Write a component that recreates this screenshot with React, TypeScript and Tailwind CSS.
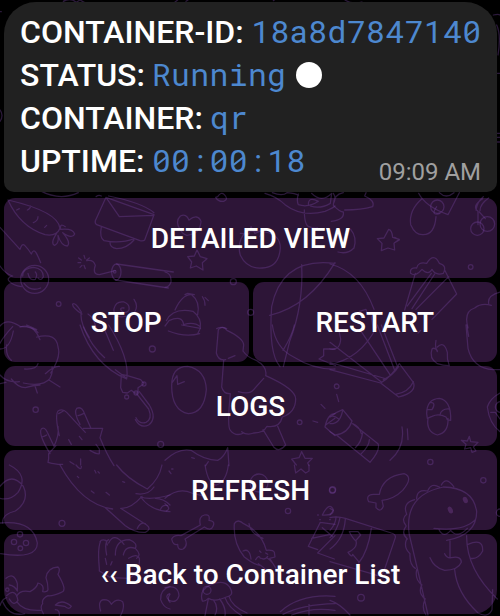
import type { ReactNode } from "react";

function Tile({ x, y, children }: { x: number; y: number; children: ReactNode }) {
  return <g transform={`translate(${x} ${y}) scale(0.33333)`}>{children}</g>;
}

function Doodles() {
  return (
    <svg
      className="pointer-events-none absolute inset-0"
      width="500"
      height="616"
      viewBox="0 0 500 616"
      fill="none"
      strokeWidth="3.8"
      strokeLinecap="round"
      strokeLinejoin="round"
    >
      <g stroke="#74449c" strokeOpacity="0.37">
        {/* edges around the message */}
        <Tile x={0} y={0}>
          <path d="M190 4q20-12 38 2M230 6l10-6 14 8M525 6l8-6M558 4l6-4M820 2l8-6M1035 0q20 14 50 6l20 8M1480 45q16-4 20 0M1490 75q14 30 4 90M1492 220h8M1490 400h10M1490 412h10M1490 426h10M0 330q12 16 0 34M0 35h4" />
        </Tile>
        {/* carrot, envelope, firecracker, snail */}
        <Tile x={0} y={190}>
          <path d="M24 30Q60 110 135 134Q170 140 180 115Q175 65 24 30ZM50 60l8-4M92 48q-2 10-10 12M114 80q0 12-14 18M134 112l6-6M170 130q-20 30-6 36q14-6 10-30q10 32 28 32q12-10-14-40q30 20 36 4q-6-18-42-14q-4-20 14-8M120 2q60 32 115 6M288 20q8-6 16-2M318 22L462 74L434 150Q430 154 420 152L290 104Q284 100 286 92ZM318 22L358 80L462 76M326 18q100 20 136 50M304 110q-6 34 8 42q50 10 90-6M330 158q0 14 20 18q30 0 52-26" />
          <path d="M0 112l60 66q6-20 14-12q10 10 20 26q6-16 14-4q8 14 14 30M0 228q16 24 38 30q-20 6-10 16q12 12 36 16" />
          <circle cx="104" cy="268" r="42" />
          <path d="M68 258q0-24 34-26q28 4 28 28q-6 14-16 4M84 250q4 24 22 18q8-14 0-22M72 280q20 26 50 14M252 196l3 10M268 204l-8 6M236 204l8 6M234 218h8M240 232l6-6M256 236l-4-10M260 212q20-4 26 14q-10 28 12 28l48-12M350 222L520 246M346 270L505 294" />
          <ellipse cx="349" cy="246" rx="14" ry="24" />
          <circle cx="344" cy="245" r="4" />
          <circle cx="176" cy="342" r="7" />
          <path d="M246 372q-30-20-28-30q8-6 26 24q-6 30 24 76M264 372q16 10 24 40M384 378q-46 10-42-22q6-24 30-20q20 8 14 26q-12 12-22 0q-6-10 8-8M402 328q14 20 2 38M0 408q20-26 62 2q40 0 52 18" />
        </Tile>
        {/* heart, star, tomato, bell, ball */}
        <Tile x={165} y={190}>
          <path d="M158 20q10-16 20-6q14 14-2 20q-16 2-24-12ZM72 90q-8-20-26-12q-16 16-2 38q8 16 22 20q40-4 42-42q-10-24-36-4ZM96 180l10 20 20 6-14 12 2 22-20-12-18 6 4-18-12-16 20-2ZM244 124q-30 30-18 72q20 42 66 38q50-2 54-60q0-40-46-48q-26-6-56-2ZM226 130l26 2 6-22 12 20 24-10-10 20" />
          <path d="M0 246q20 4 18 30q-6 16-18 16M300 10q36 10 60 34q50 38 120 20q24-10 30-16M322 8q30 12 44 0q26 2 34 8M400 12q-6 20 0 32q30 10 60-10q-30-16-30 10M440 10q30 30 60 0l-4 30q-30 18-60 8M418 60q0 46 14 50q12 6 26 4" />
          <circle cx="205" cy="275" r="9" />
          <circle cx="257" cy="367" r="9" />
          <path d="M30 360q22-48 50-46q26 20 18 60M4 392q20-40 80-28q26 20 22 50M0 408l12-16q40-18 44 12q30-10 50 6M112 320q8 10 8 26M120 322l10 10M60 314l8-4 20 4M155 416q14-8 30 0" />
          <path d="M510 220Q350 200 320 350Q310 490 345 530M410 224q6 120-36 230L355 530M314 376Q430 350 510 218" />
        </Tile>
        {/* berries, cake, balloon basket */}
        <Tile x={330} y={190}>
          <path d="M10 10q10 14 0 32M40 8q-30 6-30 38q20 20 30 20q4 24-36 28M44 60q50 0 84-10q8-18-24-32l4-10M266 10q20 40 88 64l34-66M328 8q20 20 44 0M276 26q-40 34-34 78q14 32 38 30q34 0 38-54" />
          <circle cx="322" cy="50" r="20" />
          <circle cx="442" cy="116" r="20" />
          <circle cx="472" cy="102" r="22" />
          <circle cx="422" cy="231" r="7" />
          <path d="M444 104v-40q-20-16 14-38M438 60q4-26 22-40M450 62q0-20 26-38M448 66l18 20M320 50q-20 30 10 20M62 118q20 24 10 56q-20 20-48 12" />
          <path d="M176 118q10 2 12 24l20 6-16 12 2 20-20-6-20 8 2-22-14-14 20-2ZM194 142l14 8-14 8M242 250q-4-18 18-16q4-20 30-14q22-34 38 0q24 6 12 30q-24 8-34-12q-10 20-30 0q-20 24-34 12M256 250l-32 110M304 250L232 348M314 252L246 356M356 260L258 358M344 240l36 72-74 76M0 222Q90 245 132 358" />
          <path d="M414 414q-14-50 20-60q20-16 50-8M476 340q-4-24 34-34M88 364l20-6 4 12 20-2-8 14 6 36" />
        </Tile>
        {/* cauliflower, umbrella, cactus */}
        <Tile x={0} y={325}>
          <path d="M0 55q10-20 38-50M0 72q30 0 40-54M60 6q40-12 60 38M110 36q60-14 64 30q10 30-22 78M80 0q20 8 30 14M20 60q-4 30 14 46M74 132q36 2 40-16M136 146q26-24 42-22M0 150q20 24 58 20M34 162q20 26 42 26q24-8 44-8M70 174q60 12 80-14q10-20 6-34M0 176l18-4M104 180l8 24M148 166l32 20" />
          <path d="M240 0Q280 120 380 162Q390 100 326 0M250 6q24 58 64 92M308 0l32 76M346 134l34 26M382 152l40 12 10 12-18 12v16h-10l-10-8-12 8-14-2-6-14 2-40ZM408 204l38 48q12 30-8 40q-20 6-30-14M418 200l30 40q24 40-2 60q-24 12-40-16" />
          <circle cx="432" cy="177" r="6" />
          <circle cx="380" cy="216" r="6" />
          <circle cx="408" cy="204" r="6" />
          <circle cx="457" cy="72" r="9" />
          <circle cx="107" cy="254" r="8" />
          <circle cx="482" cy="358" r="9" />
          <path d="M178 332q-14-60-4-74q14-8 26 4l56 60M176 266l14-8M240 298q-20-36-10-48q14-6 20 8l22 50M234 272q8-2 16-6M150 386q-36-60-26-74q10-8 18 10l20 42M126 336q8-2 14-6M162 364q16-34 12-60M146 400v-14l22-24M146 400l-2 12q30 8 44 6M250 310h58l-8 28q20 50 42 84M206 344l8 14M238 334l8 10M270 376q20 12 28 10v-14l-10-14M210 410l12 8M242 402v18" />
        </Tile>
        {/* egg, broccoli, flashlight */}
        <Tile x={165} y={325}>
          <path d="M10 18q50 20 94 8M50 0l56 10-8 16M68 124q54 10 56 70q-6 70-54 72q-50-10-50-84q0-58 48-58ZM22 172l14-20 2 26 20-8M160 14q14-14 26 2q50 24 50 44l-2 18M160 14l-6 70q6 24 28 20M190 100l20-8M234 78q14 20 40 28q34 20 28 46M176 106l-6 80q6 22 26 20M196 206q-10 100 0 110q16 20 40 8M220 200q34 10 46-6l30-34M302 152q90 40 90 70q0 40-40 54q-8 34-46 28q-10 20-40 20q-20 8-36-4M294 314l32 52q16 18 36-6l-24-56" />
          <path d="M322 0q10 70 64 96q60 38 124 36M388 0q-6 30-34 76M510 72h-34v20l-14 10 50 20M468 238l12 12M444 288l14 4M480 306q8-40 30-40M480 306l30 26M482 300l28-20M0 406q40-38 78-30q40 30 80 30q20-10 30-38l4 54M80 398l8 2M130 410l-8 12M410 380l10 20h22l-14 14 4 8M410 380l-8 18-22 4 14 18" />
          <circle cx="404" cy="292" r="7" />
        </Tile>
        {/* gondola, cherry, acorn */}
        <Tile x={330} y={325}>
          <path d="M0 52L155 172M94 20l88 132M142 0l52 136M154 0l50 128M0 118q90-16 140-112M0 112L170 162M0 134L152 174M152 174q34-20 56-58l42 56q12 30-44 44ZM160 164q30-14 46-40M196 208q40-6 54-38M0 72q30 6 32-30q-4-24-10-40M264 24l8-8M408 0l6 70q14 60 76 64h20M410 0l6 34" />
          <path d="M318 46q-4 20 4 34M322 76q-10-10-16-4q-10 28 16 44q16 6 36 6q-8-20-6-40q-10-36-30-16M290 266q0-44 38-46q36 6 34 66M290 266l2 14 14-6q20-10 42 2l4 8 10 2M294 280q-6 40 28 50q34-6 32-50M300 232q20 0 6 22h-14M330 270q4-20 28-18" />
          <path d="M20 208l6 22M0 276q20-16 38-22l28 34q-12 38-50 42L0 320M0 296q30 2 38-40M0 276q10-8 26 6M68 296l76 60q8 20-24 56L22 332M68 296q20 8 26 30M98 322q-4 30-22 46M118 344q0 18-24 42M216 306q10 60-36 100M232 312l2 32M418 334l4 16 22 2-14 14 8 12-12 4-4-14-18 4 4-14-14-12 18 2ZM510 204q-30 16-38 42q6 50 38 74M482 262h14l14 20" />
          <circle cx="20" cy="184" r="7" />
          <circle cx="301" cy="411" r="8" />
          <circle cx="512" cy="246" r="16" />
        </Tile>
        {/* dinosaur tail, potato, shell, splash */}
        <Tile x={0} y={465}>
          <path d="M28 0q60 30 26 82q-24 26-54 18M0 64q36-44 70 0q20 44-24 74q-40 10-38 36M180 0q66 120 158 132M350 0q30 40 92 72q36-30 44-72M316 128l60 54q30 22 60 20q20-10 4-22L362 130q30 2 64-36M408 86q36 6 54-20M422 96q30 10 88-6M422 96q30 42 88 44M510 120q-20-20-44-20M412 190q10-20 24-14M482 132q6-14 20-10M228 0q16 20 16 4M232 34l4 4M284 16l4 8M294 20l4 4M274 78l8 6M318 82l10 8M368 50l6 2" />
          <path d="M0 174q100-10 112 60q0 50-110 32" />
          <circle cx="42" cy="231" r="8" />
          <circle cx="78" cy="234" r="8" />
          <circle cx="61" cy="250" r="7" />
          <circle cx="60" cy="208" r="8" />
          <circle cx="186" cy="175" r="9" />
          <path d="M300 230q4-8 18-4l4 14M298 310q-6-60 4-82M326 234q16-34 46 4M320 270q-8-40 6-46M346 270q0-46 42-46q26 10 18 26M370 270q6-30 36-20q20 20 4 30M386 280q24-16 32 0q4 40-30 60l-56-2-34-20v-8M316 280l4 18M336 290l-4 10M302 438q-10-32 10-34q16 0 22 14q16-20 34-8q8 20-10 48" />
          <path d="M50 394q10-20 40-14q20-10 24-26q20 4 14 26q14 2 16-6q0-20-6-36q4-30 36-32q8 6 0 22q30 50 10 54q-26 12-40 10q-20 10-16 24q-10 10 2 30M20 392q20-20 30 0l4 14q-12 20-26-4M50 410q20 30 74 26M0 422q6-20 20-24M18 340q24-20 34 16v22q-8-16-24-18M166 420q20-20 48 4q-6 12-20 0ZM166 434q14 0 12 20M8 410q20 46 66 36" />
          <circle cx="22" cy="374" r="5" />
          <path d="M510 364q-30 10-28 40q8 24 28 28M510 388q-10 12 0 24" />
        </Tile>
        {/* bone, squid, jellyfish, pizza */}
        <Tile x={165} y={465}>
          <path d="M120 0q10 60 34 60q30-10 36-60M0 100q40-34 80-16l30 8M0 116q20 14 4 22M12 18l6 8M20 12h4M388 0l4 24 16-12 14 12 10-6v-18" />
          <circle cx="282" cy="54" r="27" />
          <path d="M48 212q-20-4-28 10q4 20 18 16q0 20 16 14q16-10 6-30l58-36q20 14 26-2q8-16-12-18q4-20-14-16q-18 4-12 30ZM208 176q10-16 28 0q54 26 68 80q20-2 24 6l2 14-16 4 28 44M208 176q-4 60 30 100q30 24 50 26M252 176q4 30 42 44M234 258q20-10 24 24M272 284q10-16 14-4M290 280q10 6 18-6M284 258l4 4M302 264l6 4M280 296q30 20 44 44M306 278q20 14 30 40" />
          <circle cx="369" cy="138" r="8" />
          <circle cx="502" cy="76" r="9" />
          <path d="M112 408q-10-30 20-46q50-24 66 12q8 18-14 22q-34 16-54 4q-10 10-18 8M130 402l-10 50M146 406q16 20 4 44M164 402q20 26 16 50M180 398q10 30 50 54M192 394q8 30 54 50" />
          <circle cx="126" cy="376" r="12" />
          <path d="M0 368q40-10 42 24q-6 24-30 14q-14-14 2-20M346 440q60-54 164-46M354 448q60-30 156-32M380 450q60-24 130-14M432 418v32M472 150q20-40 32-18q6 20-32 18ZM466 172l44 6M466 172l-36 72 28 10M510 212l-52 52 50 18M440 220l56-12M472 188l30 26M458 150h2M464 164h2M494 164h2" />
        </Tile>
        {/* fish, cheese, dinosaur */}
        <Tile x={330} y={465}>
          <path d="M148 88q10-54 74-62q30 10-4 50q-26 26-62 30l4 18q-8 20-22 4v-14l-22-4q-10-20 14-22Z" />
          <circle cx="8" cy="74" r="9" />
          <circle cx="460" cy="46" r="8" />
          <circle cx="93" cy="398" r="10" />
          <circle cx="510" cy="143" r="11" />
          <path d="M0 130l10 6-10 14M0 158q20-6 46 2L184 204q14 4 12 14L162 318q-8 20-30 10L0 290M18 156q0 20-18 40M30 158q-8 40-30 60M46 162q-4 60-46 90M124 190q-10 70-38 104M58 200h26l8 10-14 16M58 200q10 20 20 28q6 20-24 34q12 18 14 6l18 22M0 406q30 10 60 44" />
          <path d="M294 450Q260 300 238 210Q220 90 340 66Q430 68 440 140Q440 210 350 226M312 190q90 10 124-26M410 212q-2 100 92 190M326 192q14 30 36 4q20 26 50-6M374 314q6 70 70 130q30 16 42-10l2-60M360 228v48M344 266q6 14 20 12q30-6 30 14q-10 24-50 24q-32-8-44-38M414 238q46-20 44 20q-14 26-36 22M260 102q0-30 32-24M294 76q10-24 34-10M334 60q14-28 38 6M254 104q-38 10-24 44M230 148q-18 14-2 34M228 184q-16 20 4 38M230 222q-10 24 8 42M240 266q-2 34 16 44M260 314q-6 30 16 46M274 362q-10 24 12 40M284 406q-10 24 4 44" />
          <ellipse cx="361" cy="135" rx="7" ry="11" fill="#4a265b" stroke="none" transform="rotate(-25 361 135)" />
          <ellipse cx="406" cy="105" rx="7" ry="10" fill="#4a265b" stroke="none" transform="rotate(-25 406 105)" />
        </Tile>
      </g>
    </svg>
  );
}

function Key({ children, className = "" }: { children: ReactNode; className?: string }) {
  return (
    <button
      className={`flex h-20 flex-1 items-center justify-center rounded-[11px] bg-[#2d1537] pt-0.5 text-[28px] font-medium leading-none text-white ${className}`}
    >
      <span className="relative z-10">{children}</span>
    </button>
  );
}

function Zero() {
  return (
    <span className="relative inline-block">
      0
      <span className="absolute left-[2.5px] top-[20px] h-[2px] w-[13px] -rotate-[38deg] bg-[#4d88cf]" />
    </span>
  );
}

function Colon() {
  return <span className="inline-block w-[19.2px] text-center tracking-normal">:</span>;
}

const digits = "tracking-[1.25px] font-normal text-[#4d88cf]";
const words =
  "-ml-px font-['Roboto_Mono','DejaVu_Sans_Mono',monospace] text-[31.5px] font-normal leading-[0] tracking-[0.3px] text-[#4d88cf]";

export default function App() {
  return (
    <main className="relative h-[616px] w-[500px] overflow-hidden bg-black pl-1 pr-[3px] pt-0.5 font-['Roboto',sans-serif]">
      <section className="relative z-10 h-[190px] rounded-b-[10px] rounded-t-[32px] bg-[#212121] pl-4 pt-[9px] text-[32px] font-medium text-white">
        <p className="h-[43px] whitespace-nowrap leading-[43px]">
          CONTAINER-ID: <span className={digits}>18a8d784714<Zero /></span>
        </p>
        <p className="h-[43px] whitespace-nowrap leading-[43px]">
          STATUS: <span className={words}>Running</span>
          <span className="ml-[10px] inline-block size-[26px] rounded-full bg-white align-[-2px]" />
        </p>
        <p className="h-[43px] whitespace-nowrap leading-[43px]">
          CONTAINER: <span className={words}>qr</span>
        </p>
        <div className="flex h-[43px] justify-between pr-4 leading-[43px]">
          <p className="whitespace-nowrap">
            UPTIME:{" "}
            <span className={digits}>
              <Zero /><Zero /><Colon /><Zero /><Zero /><Colon />18
            </span>
          </p>
          <time className="pt-[11px] text-2xl font-normal leading-[43px] text-[#a0a0a0]">09:09 AM</time>
        </div>
      </section>
      <nav className="mt-1.5 flex flex-col gap-1">
        <div className="flex"><Key>DETAILED VIEW</Key></div>
        <div className="flex gap-1"><Key>STOP</Key><Key>RESTART</Key></div>
        <div className="flex"><Key>LOGS</Key></div>
        <div className="flex"><Key>REFRESH</Key></div>
        <div className="flex"><Key className="rounded-b-[24px]">‹‹ Back to Container List</Key></div>
      </nav>
      <Doodles />
    </main>
  );
}
